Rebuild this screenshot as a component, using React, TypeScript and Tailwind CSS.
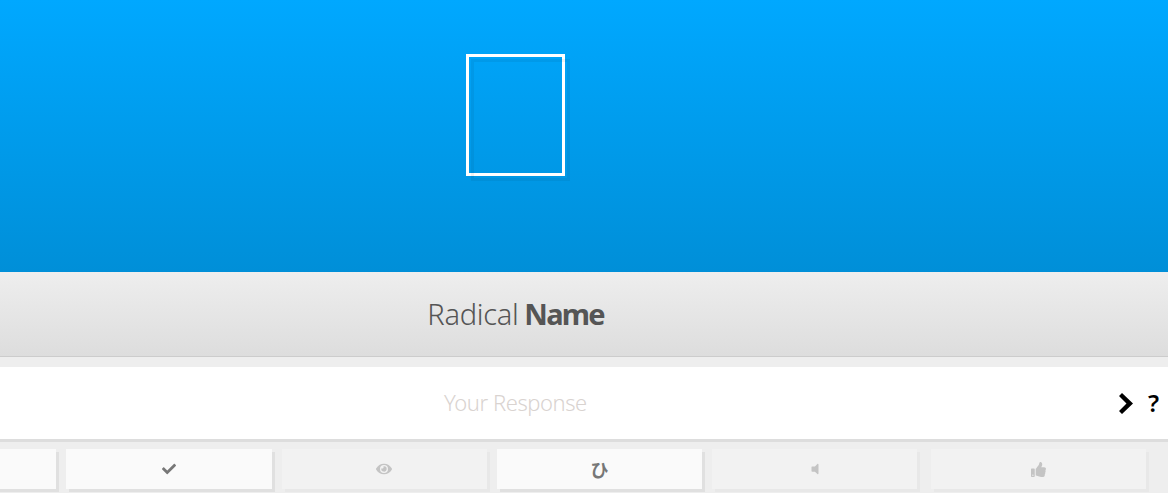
import React from 'react';
import { FaCheck, FaEye, FaVolumeOff, FaThumbsUp } from 'react-icons/fa';

function ToolButton({ active, className, children }: { active?: boolean; className: string; children?: React.ReactNode }) {
  return (
    <div
      className={`flex h-10 items-center justify-center ${
        active
          ? 'bg-[#fafafa] text-[#777777] shadow-[3px_3px_0_#e0e0e0]'
          : 'bg-[#f2f2f2] text-[#c4c4c4] shadow-[3px_3px_0_#e8e8e8]'
      } ${className}`}
    >
      {children}
    </div>
  );
}

export default function App() {
  return (
    <div className="h-[493px] w-[1168px] overflow-hidden bg-[#eeeeee] font-['Noto_Sans',sans-serif]">
      <div className="flex h-[272px] justify-center bg-gradient-to-b from-[#00a8ff] to-[#008fd8] pr-[137px]">
        <div className="relative mt-[54px] h-[122px] w-[99px] border-[3px] border-white">
          <div className="absolute left-[2px] top-[2px] h-[122px] w-[99px] border-[3px] border-black/5" />
        </div>
      </div>

      <div className="flex h-[85px] items-center justify-center border-b border-[#cccccc] bg-gradient-to-b from-[#eeeeee] to-[#dddddd] pr-[137px] text-[29px] text-[#555555]">
        <span className="font-light tracking-[-0.3px]">Radical</span>
        <span className="ml-[6px] font-bold tracking-[-1.8px]">Name</span>
      </div>

      <div className="mt-[10px] flex h-[75px] items-center border-b-[3px] border-[#dddddd] bg-white">
        <div className="mb-[1px] flex-1 pr-[88px] text-center text-[22px] font-light tracking-[-0.45px] text-[#d9d3d0]">Your Response</div>
        <svg viewBox="0 0 14 21" className="mr-[15px] h-[21px] w-[14px] text-black">
          <polygon points="3,0 14,10.5 3,21 0,18 7.5,10.5 0,3" fill="currentColor" />
        </svg>
        <span className="mr-[9px] text-[24px] font-semibold leading-none text-black">?</span>
      </div>

      <div className="flex items-start pt-[7px]">
        <ToolButton active className="ml-[-60px] w-[116px]" />
        <ToolButton active className="ml-[10px] w-[206px]"><FaCheck className="h-[14px] w-[14px]" /></ToolButton>
        <ToolButton className="ml-[10px] w-[205px]"><FaEye className="mr-[2px] h-[16px] w-[16px]" /></ToolButton>
        <ToolButton active className="ml-[10px] w-[205px]">
          <span className="font-['Noto_Sans_CJK_JP',sans-serif] text-[18px] font-bold leading-none">ひ</span>
        </ToolButton>
        <ToolButton className="ml-[10px] w-[205px]"><FaVolumeOff className="h-[14px] w-[14px]" /></ToolButton>
        <ToolButton className="ml-[14px] w-[215px]"><FaThumbsUp className="h-[15px] w-[15px]" /></ToolButton>
      </div>
    </div>
  );
}
